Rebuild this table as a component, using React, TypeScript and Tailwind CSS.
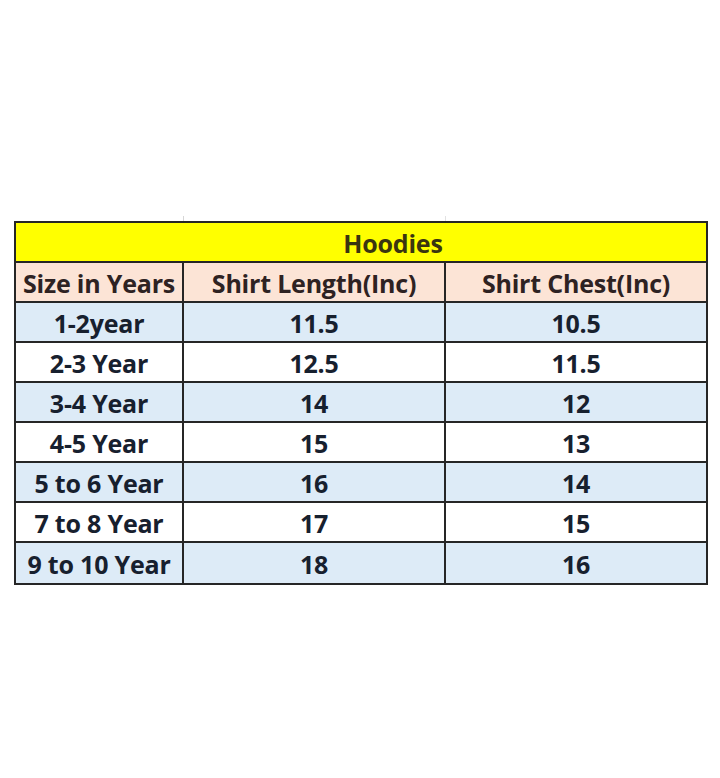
import React from "react";

const rows: [string, string, string][] = [
  ["1-2year", "11.5", "10.5"],
  ["2-3 Year", "12.5", "11.5"],
  ["3-4 Year", "14", "12"],
  ["4-5 Year", "15", "13"],
  ["5 to 6 Year", "16", "14"],
  ["7 to 8 Year", "17", "15"],
  ["9 to 10 Year", "18", "16"],
];

export default function App() {
  return (
    <div className="w-[720px] h-[778px] bg-white pt-[216px] pl-[14px]" style={{ fontFamily: "'Open Sans', Lato, sans-serif" }}>
      <div className="w-[694px] h-[5px] pl-[2px] grid grid-cols-[168px_262px_260px]">
        <div className="border-r border-[#d6d6d6]"></div>
        <div className="border-r border-[#e2e2e2]"></div>
        <div></div>
      </div>
      <div className="w-[694px] border-2 border-[#262626] font-bold text-[25px] leading-none tracking-[-0.2px]">
        <div className="h-[40px] border-b-2 border-[#262626] bg-[#ffff00] flex items-center justify-center pt-[2px] pl-[64px] text-[#3a3510]">
          Hoodies
        </div>
        <div className="grid grid-cols-[168px_262px_260px] h-[40px] border-b-2 border-[#262626] bg-[#fce4d6] text-[#2e2222]">
          <div className="border-r-2 border-[#262626] flex items-center justify-center pt-[2px]">Size in Years</div>
          <div className="border-r-2 border-[#262626] flex items-center justify-center pt-[2px]">Shirt Length(Inc)</div>
          <div className="flex items-center justify-center pt-[2px]">Shirt Chest(Inc)</div>
        </div>
        {rows.map((r, i) => (
          <div
            key={i}
            className={`grid grid-cols-[168px_262px_260px] h-[40px] text-[#17202e] ${i < rows.length - 1 ? "border-b-2 border-[#262626]" : ""} ${i % 2 === 0 ? "bg-[#ddebf7]" : "bg-white"}`}
          >
            <div className="border-r-2 border-[#262626] flex items-center justify-center pt-[2px]">{r[0]}</div>
            <div className="border-r-2 border-[#262626] flex items-center justify-center pt-[2px]">{r[1]}</div>
            <div className="flex items-center justify-center pt-[2px]">{r[2]}</div>
          </div>
        ))}
      </div>
    </div>
  );
}
